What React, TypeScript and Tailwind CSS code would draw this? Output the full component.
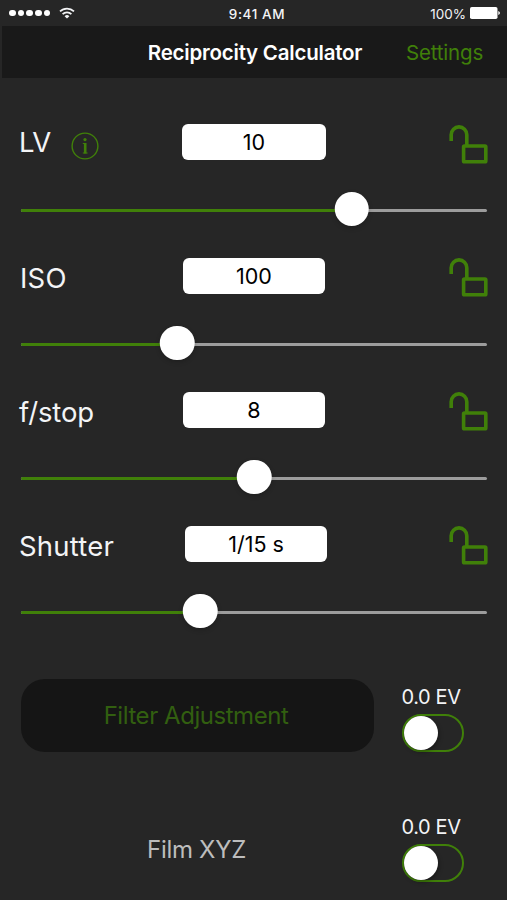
type Setting = {
  label: string
  value: string
  percent: number
  labelClass: string
  valueClass: string
  lockClass: string
  info?: boolean
}

const settings: Setting[] = [
  {
    label: "LV",
    value: "10",
    percent: 71,
    labelClass: "w-[162px] -ml-px tracking-[-0.5px]",
    valueClass: "w-36 ml-px",
    lockClass: "mt-px",
    info: true,
  },
  {
    label: "ISO",
    value: "100",
    percent: 33.5,
    labelClass: "w-[163px] pt-0.5 tracking-[0.2px]",
    valueClass: "w-[142px]",
    lockClass: "mt-0",
  },
  {
    label: "f/stop",
    value: "8",
    percent: 50,
    labelClass: "w-[163px] -ml-px pt-0.5 tracking-[-0.15px]",
    valueClass: "w-[142px] ml-px",
    lockClass: "mt-0",
  },
  {
    label: "Shutter",
    value: "1/15 s",
    percent: 38.5,
    labelClass: "w-[165px] -ml-px pt-0.5 tracking-[0.2px]",
    valueClass: "w-[142px] ml-px",
    lockClass: "mt-0",
  },
]

function StatusBar() {
  return (
    <div className="grid h-[26px] grid-cols-3 items-center pr-[7px] pl-[9px] text-[13.5px] text-gray-100">
      <div className="flex items-center">
        <div className="flex gap-[2px]">
          {[0, 1, 2, 3, 4].map((dot) => (
            <span key={dot} className="size-[6.7px] rounded-full bg-white" />
          ))}
        </div>
        <svg width="16" height="12" viewBox="0 0 16 12" fill="none" stroke="#f3f4f6" strokeWidth="1.7" className="ml-[9px]">
          <path d="M1 4.4a10 10 0 0 1 14 0" />
          <path d="M3.6 7.2a6.2 6.2 0 0 1 8.8 0" />
          <path d="M8 11.6 5.6 9.2a3.4 3.4 0 0 1 4.8 0Z" fill="#f3f4f6" stroke="none" />
        </svg>
      </div>
      <div className="pt-[2px] pl-[5px] text-center font-medium tracking-[0.6px] whitespace-nowrap">9:41 AM</div>
      <div className="flex items-center justify-end">
        <span className="pt-[2px]">100%</span>
        <svg width="30" height="12" viewBox="0 0 30 12" fill="#fff" className="ml-[4px]">
          <rect width="27.5" height="12" rx="1.8" />
          <path d="M28.3 4c1.2.5 1.6 1.2 1.6 2s-.4 1.5-1.6 2Z" />
        </svg>
      </div>
    </div>
  )
}

function UnlockIcon({ className }: { className: string }) {
  return (
    <svg width="39" height="39" viewBox="0 0 39 39" fill="none" stroke="#408009" strokeWidth="3.6" className={className}>
      <path d="M2.2 16V9.7a7.8 7.8 0 0 1 15.6 0V21" />
      <rect x="14.6" y="21" width="22.2" height="15.7" rx="0.8" strokeLinejoin="round" />
    </svg>
  )
}

function InfoIcon() {
  return (
    <svg width="28" height="28" viewBox="0 0 28 28" fill="none" stroke="#408009" className="mt-[7.5px] ml-[20px]">
      <circle cx="14" cy="14" r="12.9" strokeWidth="1.4" />
      <circle cx="14" cy="7.6" r="1.6" fill="#408009" stroke="none" />
      <path d="M11.8 11.5h3M11.8 21h4.8" strokeWidth="1.2" />
      <path d="M14.2 11v10.5" strokeWidth="2.6" />
    </svg>
  )
}

function Slider({ percent }: { percent: number }) {
  return (
    <div className="relative mt-[49px] h-[3px] rounded-full bg-[#9c9c9c]">
      <div className="h-full rounded-full bg-[#408009]" style={{ width: `${percent}%` }} />
      <div
        className="absolute -top-[17.5px] size-[34.5px] -translate-x-1/2 rounded-full bg-white shadow-[0_2px_5px_rgba(0,0,0,0.2)]"
        style={{ left: `${percent}%` }}
      />
    </div>
  )
}

function SettingRow({ setting }: { setting: Setting }) {
  return (
    <div className="h-[134px] pr-[19px] pl-[20px]">
      <div className="flex h-9">
        <div className={`flex h-9 shrink-0 text-[27.5px] leading-9 text-gray-100 ${setting.labelClass}`}>
          {setting.label}
          {setting.info && <InfoIcon />}
        </div>
        <div
          className={`h-9 rounded-[6px] bg-white text-center text-[21.5px] leading-[36px] text-black ${setting.valueClass}`}
        >
          {setting.value}
        </div>
        <UnlockIcon className={`ml-auto shrink-0 ${setting.lockClass}`} />
      </div>
      <div className="pr-px pl-px">
        <Slider percent={setting.percent} />
      </div>
    </div>
  )
}

function EvSwitch() {
  return (
    <div className="w-[62.5px]">
      <div className="text-[20px] leading-[30px] tracking-[-0.4px] whitespace-nowrap text-gray-100">0.0 EV</div>
      <div className="mt-[2px] h-[38px] rounded-full border-2 border-[#408009]">
        <div className="size-[34px] rounded-full bg-white shadow-[1px_2px_4px_rgba(0,0,0,0.35)]" />
      </div>
    </div>
  )
}

export default function App() {
  return (
    <div className="h-[900px] w-[507px] overflow-hidden bg-[#262626] font-['Inter',sans-serif]">
      <StatusBar />

      {/* Navigation bar */}
      <div className="ml-[2px] grid h-[52px] grid-cols-[1fr_auto_1fr] items-center bg-[#191919]">
        <span />
        <h1 className="pt-[3px] pl-px text-[20.5px] font-semibold tracking-[-0.22px] whitespace-nowrap text-white">
          Reciprocity Calculator
        </h1>
        <button className="pt-[3px] pr-6 text-right text-[20.5px] tracking-[-0.2px] text-[#408009]">Settings</button>
      </div>

      {/* Exposure settings */}
      <div className="pt-[46px]">
        {settings.map((setting) => (
          <SettingRow key={setting.label} setting={setting} />
        ))}
      </div>

      {/* Filter and film */}
      <div className="mt-[19px] flex pl-[21px]">
        <button className="h-[73px] w-[353px] rounded-[24px] bg-[#151515] pr-[3px] text-[24px] tracking-[-0.45px] text-[#325f10]">
          Filter Adjustment
        </button>
        <div className="mt-[3px] ml-[27.5px]">
          <EvSwitch />
        </div>
      </div>
      <div className="mt-[60px] flex pl-[21px]">
        <div className="mt-[19px] w-[351px] text-center text-[24px] leading-[38px] tracking-[-0.3px] text-[#bdbdbd]">
          Film XYZ
        </div>
        <div className="ml-[29.5px]">
          <EvSwitch />
        </div>
      </div>
    </div>
  )
}
